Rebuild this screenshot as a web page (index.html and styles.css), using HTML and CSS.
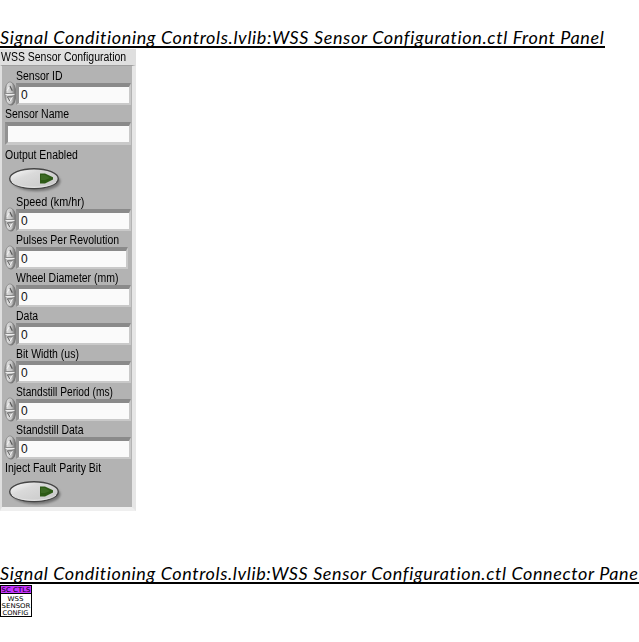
FILE: index.html
```
<!DOCTYPE html>
<html lang="en">
<head>
<meta charset="utf-8">
<title>WSS Sensor Configuration</title>
<link rel="stylesheet" href="styles.css">
</head>
<body>
<svg class="defs" width="0" height="0" aria-hidden="true">
  <defs>
    <linearGradient id="metal"><stop offset="0" stop-color="#777"/><stop offset=".25" stop-color="#dadada"/><stop offset=".65" stop-color="#c2c2c2"/><stop offset="1" stop-color="#6b6b6b"/></linearGradient>
    <linearGradient id="face" x1="0" y1="0" x2="1" y2="1"><stop offset="0" stop-color="#fff"/><stop offset=".35" stop-color="#dadada"/><stop offset="1" stop-color="#c6c6c6"/></linearGradient>
    <filter id="soft" x="-20%" y="-20%" width="140%" height="150%"><feGaussianBlur stdDeviation="1.1"/></filter>
    <symbol id="spin" viewBox="0 0 13 25">
      <ellipse cx="7" cy="13" rx="5.5" ry="11.5" fill="#777"/>
      <ellipse cx="6" cy="12.2" rx="5.3" ry="11.4" fill="url(#metal)" stroke="#828282" stroke-width=".7"/>
      <path d="M1.5 12.5H10.5" stroke="#8a8a8a"/><path d="M1.5 13.5H10.5" stroke="#eee"/>
      <path d="M3 9.8L5.7 5" fill="none" stroke="#f4f4f4" stroke-width="1"/>
      <path d="M5.9 5L8.3 9.8" fill="none" stroke="#555" stroke-width="1.2"/>
      <path d="M3.2 15.8H8.6" fill="none" stroke="#666" stroke-width="1.1"/>
      <path d="M3.5 16L5.8 20" fill="none" stroke="#666" stroke-width="1"/>
      <path d="M8.4 16.2L6.2 20" fill="none" stroke="#f4f4f4" stroke-width="1"/>
    </symbol>
    <symbol id="button" viewBox="0 0 56 26">
      <ellipse cx="29.5" cy="14.3" rx="24" ry="10" fill="#747474" filter="url(#soft)"/>
      <ellipse cx="27" cy="11.7" rx="24.3" ry="9.9" fill="url(#face)" stroke="#444" stroke-width="1.4"/>
      <path d="M5 15C10 22 43 22 49 15" fill="none" stroke="#eee" stroke-width=".8"/>
      <path d="M33 6.5H38L46 10.3V12.5L38 16.5H33Z" fill="#2d5a16"/>
      <path d="M34 8H38L43 11L38 13H34Z" fill="#3c6a24"/>
    </symbol>
  </defs>
</svg>
<h2 class="heading heading-front"><span class="heading-text">Signal Conditioning Controls.lvlib:WSS Sensor Configuration.ctl Front Panel</span></h2>
<section class="panel">
  <div class="panel-title"><span class="t">WSS Sensor Configuration</span></div>
  <div class="panel-body">
    <div class="row numeric"><label><span class="t">Sensor ID</span></label><svg class="spin"><use href="#spin"/></svg><div class="field">0</div></div>
    <div class="row name"><label><span class="t">Sensor Name</span></label><div class="field"></div></div>
    <div class="row toggle"><label><span class="t">Output Enabled</span></label><svg class="button"><use href="#button"/></svg></div>
    <div class="row numeric"><label><span class="t wide">Speed (km/hr)</span></label><svg class="spin"><use href="#spin"/></svg><div class="field">0</div></div>
    <div class="row numeric short"><label><span class="t">Pulses Per Revolution</span></label><svg class="spin"><use href="#spin"/></svg><div class="field">0</div></div>
    <div class="row numeric"><label><span class="t">Wheel Diameter (mm)</span></label><svg class="spin"><use href="#spin"/></svg><div class="field">0</div></div>
    <div class="row numeric"><label><span class="t">Data</span></label><svg class="spin"><use href="#spin"/></svg><div class="field">0</div></div>
    <div class="row numeric"><label><span class="t">Bit Width (us)</span></label><svg class="spin"><use href="#spin"/></svg><div class="field">0</div></div>
    <div class="row numeric"><label><span class="t narrow">Standstill Period (ms)</span></label><svg class="spin"><use href="#spin"/></svg><div class="field">0</div></div>
    <div class="row numeric"><label><span class="t">Standstill Data</span></label><svg class="spin"><use href="#spin"/></svg><div class="field">0</div></div>
    <div class="row toggle"><label><span class="t">Inject Fault Parity Bit</span></label><svg class="button"><use href="#button"/></svg></div>
  </div>
</section>
<h2 class="heading heading-connector"><span class="heading-text">Signal Conditioning Controls.lvlib:WSS Sensor Configuration.ctl Connector Pane</span></h2>
<svg class="connector" viewBox="0 0 32 32">
  <rect x=".5" y=".5" width="31" height="31" fill="#fff" stroke="#000"/>
  <rect x="1" y="1" width="30" height="7" fill="#c533ff"/>
  <path d="M1 8.5H31" stroke="#000"/>
  <text x="1.5" y="7" textLength="29" lengthAdjust="spacingAndGlyphs">SC CTLS</text>
  <text x="7.5" y="16" textLength="16" lengthAdjust="spacingAndGlyphs">WSS</text>
  <text x="1.5" y="23" textLength="29" lengthAdjust="spacingAndGlyphs">SENSOR</text>
  <text x="2.5" y="30" textLength="26" lengthAdjust="spacingAndGlyphs">CONFIG</text>
</svg>
</body>
</html>
```
FILE: styles.css
```
* { box-sizing: border-box; }
body { margin: 0; width: 639px; height: 642px; overflow: hidden; background: #fff; color: #000; }
svg { display: block; }
.defs { position: absolute; }
.heading {
  margin: 0;
  height: 20px;
  border-bottom: 2px solid #000;
  overflow: hidden;
  font: italic 400 18px/18px Lato, sans-serif;
  font-variant-ligatures: none;
  letter-spacing: .63px;
  white-space: nowrap;
}
.heading-text { display: inline-block; }
.heading-front { width: 605px; margin-top: 28px; }
.heading-connector { margin-top: 53px; width: 639px; letter-spacing: .61px; }
.panel {
  width: 136px;
  height: 462px;
  margin-top: 1px;
  background: #efefef;
  font: 12px/16px "Liberation Sans", Arial, sans-serif;
  white-space: nowrap;
}
.panel-title { height: 16px; padding-left: 1px; background: #dfdfdf; }
.t { display: inline-block; transform: scaleX(.873); transform-origin: 0 0; }
.wide { transform: scaleX(.9); }
.narrow { transform: scaleX(.85); }
.panel-body {
  width: 136px;
  height: 446px;
  border: solid;
  border-width: 1px 4px 4px 2px;
  border-color: #a0a0a0 #e6e6e6 #efefef #dfdfdf;
  background: #b3b3b3;
}
.row { height: 38px; display: grid; align-content: start; }
.row label { height: 17px; line-height: 20px; }
.numeric { grid-template: 17px 21px / 13px 115px; padding-left: 1px; }
.numeric label { grid-column: 1 / 3; padding-left: 13px; }
.spin { width: 13px; height: 25px; margin: -2px 0 0 1px; }
.field {
  height: 22px;
  border: solid;
  border-width: 4px 2px 2px 3px;
  border-color: #8a8a8a #c9c9c9 #c9c9c9 #929292;
  background: #fafafa;
  color: #111;
  line-height: 17px;
}
.numeric .field { padding-left: 2px; width: 115px; }
.numeric.short .field { width: 112px; }
.name { height: 41px; padding-left: 3px; grid-template-rows: 18px 23px; }
.name .field { width: 126px; height: 23px; border-bottom-width: 3px; }
.toggle { height: 47px; padding-left: 3px; }
.button { width: 56px; height: 26px; margin: 5px 0 0 2px; }
.connector { width: 32px; height: 32px; margin-top: 1px; }
.connector text { font: 6.5px "DejaVu Sans", sans-serif; fill: #000; }
```
